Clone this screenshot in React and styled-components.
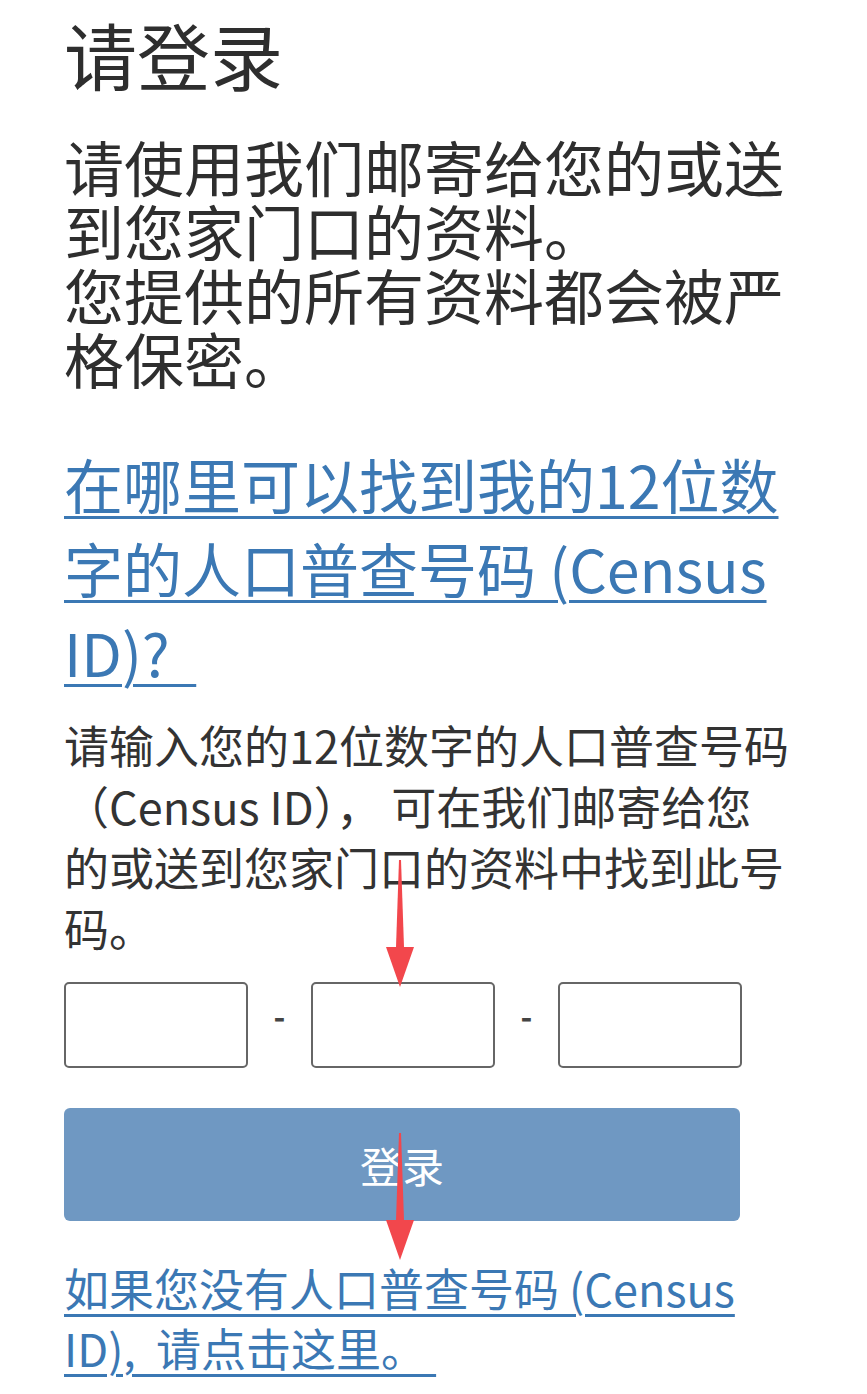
import React from 'react'
import styled, { createGlobalStyle } from 'styled-components'

const GlobalStyle = createGlobalStyle`
    html, body {
        margin: 0;
        padding: 0;
        background: #fff;
    }
    body {
        font-family: "Noto Sans CJK SC", "Noto Sans", sans-serif;
        color: #333;
    }
`;

function Arrow({ top, left, length }) {
    // red annotation arrow drawn over the page
    const head = 40
    return (
        <ArrowBox top={top} left={left}>
            <svg width="30" height={length} viewBox={`0 0 30 ${length}`}>
                <polygon
                    points={`14,0 16,0 19,${length - head} 11,${length - head}`}
                    fill="#f2474c"
                />
                <polygon
                    points={`1,${length - head} 29,${length - head} 15,${length}`}
                    fill="#f2474c"
                />
            </svg>
        </ArrowBox>
    )
}

function App() {
    return (
        <>
            <GlobalStyle />
            <Page>
                <Title>请登录</Title>
                <Intro>
                    请使用我们邮寄给您的或送到您家门口的资料。<br />
                    您提供的所有资料都会被严格保密。
                </Intro>
                <HelpLink href="#" size={59} lh={84}>
                    在哪里可以找到我的12位数字的人口普查号码 (Census ID)?&nbsp;&nbsp;
                </HelpLink>
                <Hint>
                    请输入您的12位数字的人口普查号码（Census ID）， 可在我们邮寄给您的或送到您家门口的资料中找到此号码。
                </Hint>
                <CodeRow>
                    <CodeInput />
                    <Dash>-</Dash>
                    <CodeInput />
                    <Dash>-</Dash>
                    <CodeInput />
                </CodeRow>
                <LoginButton>登录</LoginButton>
                <BottomLink href="#" size={45} lh={60}>
                    如果您没有人口普查号码 (Census ID),&nbsp;&nbsp;请点击这里。&nbsp;
                </BottomLink>
                <Arrow top={860} left={385} length={127} />
                <Arrow top={1133} left={385} length={127} />
            </Page>
        </>
    )
}

const Page = styled.div`
    position: relative;
    width: 867px;
    min-height: 1394px;
    box-sizing: border-box;
    padding: 9px 76px 0 64px;
    overflow: hidden;
`;
const Title = styled.h1`
    margin: 0;
    font-size: 73px;
    line-height: 88px;
    font-weight: 400;
    color: #2e2e2e;
`;
const Intro = styled.p`
    margin: 37px 0 0;
    font-size: 60px;
    line-height: 64px;
    color: #2e2e2e;
`;
const Link = styled.a`
    display: block;
    color: #3b78b4;
    font-size: ${({ size }) => size}px;
    line-height: ${({ lh }) => lh}px;
    text-decoration: underline;
    text-decoration-thickness: 3px;
    text-underline-offset: 7px;
`;
const HelpLink = styled(Link)`
    margin-top: 52px;
`;
const Hint = styled.p`
    margin: 20px 0 0;
    font-size: 45px;
    line-height: 61px;
    color: #333;
`;
const CodeRow = styled.div`
    display: flex;
    align-items: center;
    width: 678px;
    margin-top: 24px;
`;
const CodeInput = styled.input`
    width: 184px;
    height: 86px;
    box-sizing: border-box;
    border: 2px solid #666;
    border-radius: 5px;
    background: #fff;
`;
const Dash = styled.span`
    width: 63px;
    text-align: center;
    font-size: 32px;
    line-height: 30px;
    font-weight: 700;
    color: #444;
    margin-top: -20px;
`;
const LoginButton = styled.button`
    display: block;
    width: 676px;
    height: 113px;
    margin-top: 40px;
    border: none;
    border-radius: 6px;
    background: #6f98c2;
    color: #fff;
    font-family: "Noto Sans CJK SC", sans-serif;
    font-size: 42px;
`;
const BottomLink = styled(Link)`
    margin-top: 37px;
`;
const ArrowBox = styled.div`
    position: absolute;
    top: ${({ top }) => top}px;
    left: ${({ left }) => left}px;
    line-height: 0;
    pointer-events: none;
`;

export default App
